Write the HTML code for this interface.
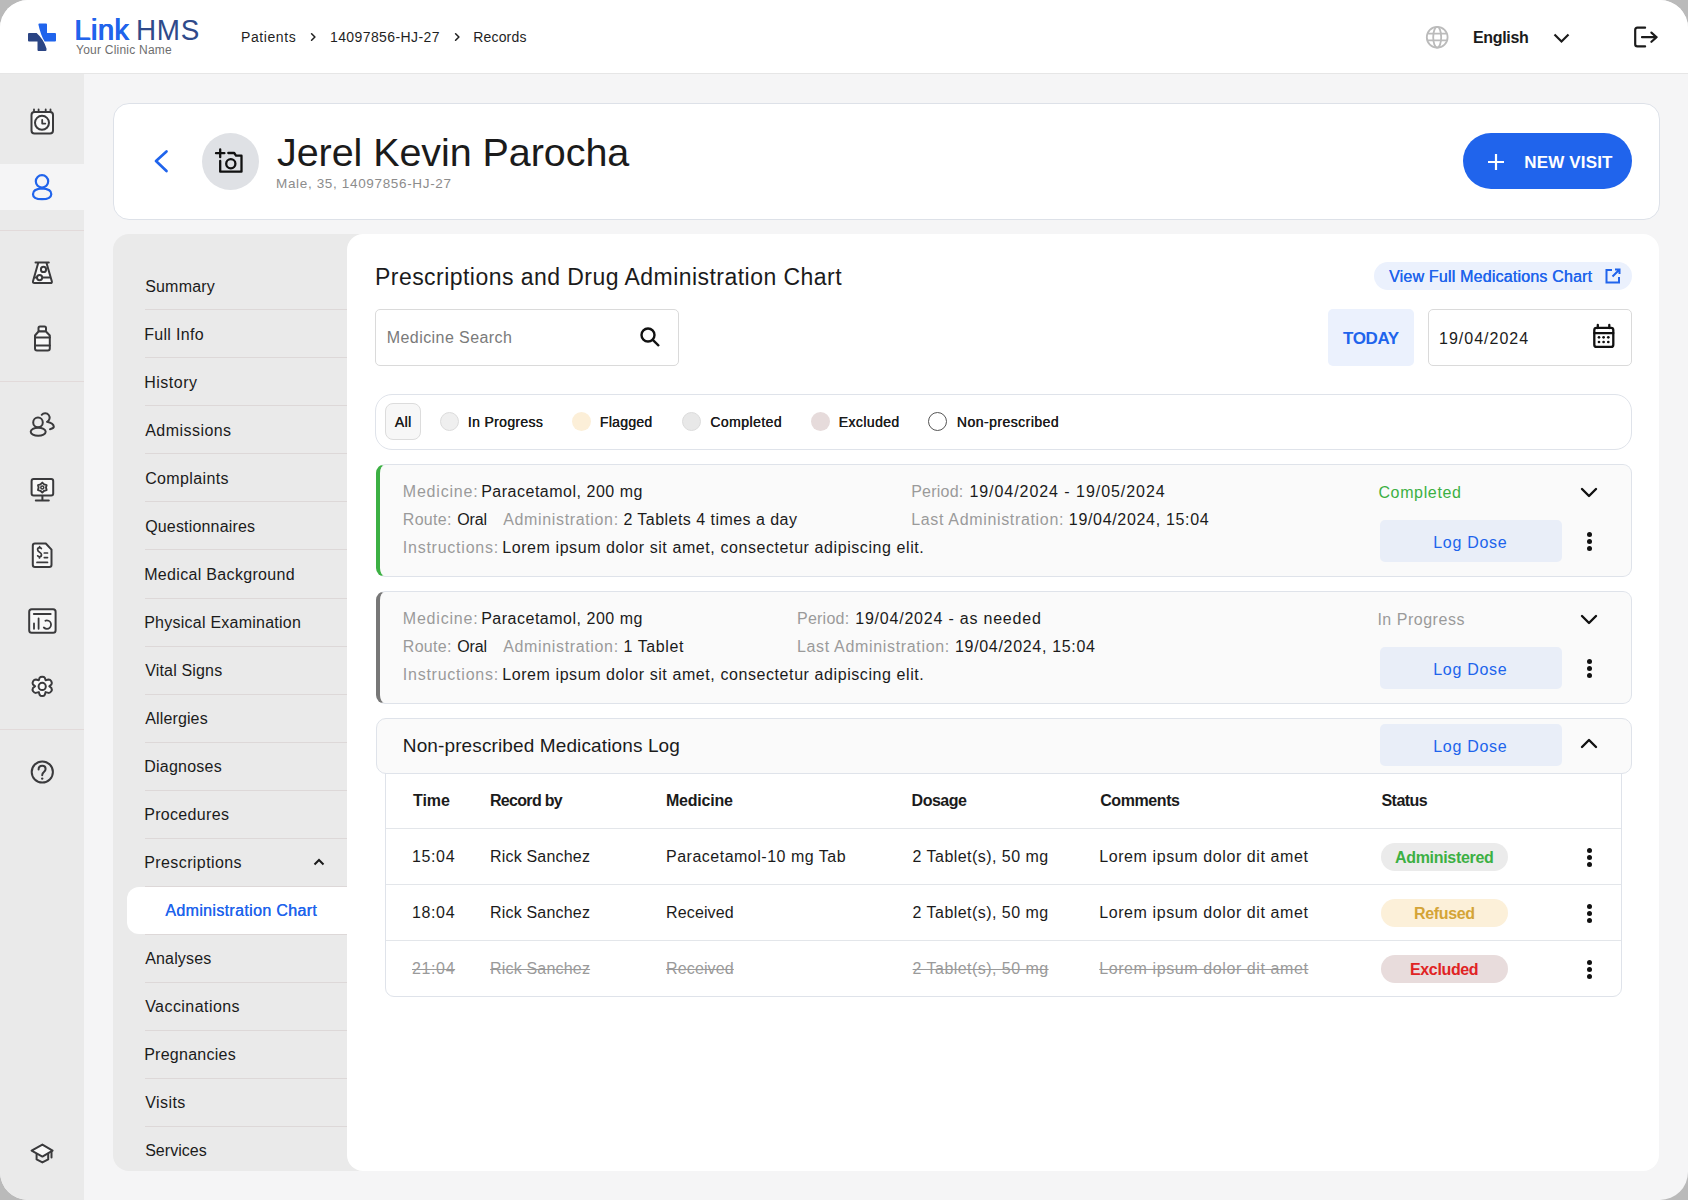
<!DOCTYPE html>
<html><head><meta charset="utf-8">
<style>
*{margin:0;padding:0;box-sizing:border-box}
html,body{width:1688px;height:1200px;overflow:hidden;background:#bababa}
body{font-family:"Liberation Sans",sans-serif;color:#1b1b1b}
#root{position:absolute;left:0;top:0;width:1688px;height:1200px;background:#f5f5f6;border-radius:28px;overflow:hidden}
.a{position:absolute}
.t{position:absolute;line-height:1;white-space:nowrap}
svg{position:absolute;overflow:visible}
.sdiv{position:absolute;left:0;width:84px;height:1px;background:#e2dada}
.ndiv{position:absolute;left:145px;width:202px;height:1px;background:#ddd8d8}
.ld{position:absolute;left:1380px;width:182px;height:42px;border-radius:5px;background:#e9eef8}
.kb{position:absolute;left:1586px;width:7px;height:20px}
.kb i{position:absolute;left:1px;width:5.2px;height:5.2px;border-radius:50%;background:#111}.kb i:nth-child(1){top:1px}.kb i:nth-child(2){top:8px}.kb i:nth-child(3){top:15px}
.rad{position:absolute;width:19px;height:19px;border-radius:50%}
</style></head>
<body><div id="root">

<!-- top bar -->
<div class="a" style="left:0;top:0;width:1688px;height:74px;background:#fff;border-bottom:1px solid #e6e6e6"></div>
<svg style="left:28px;top:23px" width="28" height="28" viewBox="0 0 28 28">
  <path d="M10.4 1.4Q10.4 0.4 11.4 0.4H18Q19 0.4 19 1.4V10H27Q28 10 28 11V17.5Q28 18.5 27 18.5H16.6Q12.5 11.5 10.4 1.4Z" fill="#2064ec"/>
  <path d="M0 11Q0 10 1 10H8.6Q15.5 16 18.5 25.5V27Q18.5 28 17.5 28H10.5Q9.5 28 9.5 27V18.5H1Q0 18.5 0 17.5Z" fill="#2b4584"/>
</svg>
<svg style="left:310px;top:32px" width="7" height="10" viewBox="0 0 7 10"><path d="M1.6 1.8 L4.9 5 L1.6 8.2" fill="none" stroke="#222" stroke-width="1.6" stroke-linecap="round" stroke-linejoin="round"/></svg>
<svg style="left:454px;top:32px" width="7" height="10" viewBox="0 0 7 10"><path d="M1.6 1.8 L4.9 5 L1.6 8.2" fill="none" stroke="#222" stroke-width="1.6" stroke-linecap="round" stroke-linejoin="round"/></svg>
<svg style="left:1425px;top:25px" width="24" height="24" viewBox="0 0 24 24" fill="none" stroke="#bbbbbb" stroke-width="1.8">
  <circle cx="12.2" cy="12.2" r="10.4"/><ellipse cx="12.2" cy="12.2" rx="4" ry="10.4"/><path d="M2.3 8.6H22.1M2.3 15.4H22.1"/>
</svg>
<svg style="left:1553px;top:33px" width="17" height="10" viewBox="0 0 17 10"><path d="M1.5 1.5 L8.5 8.5 L15.5 1.5" fill="none" stroke="#1b1b1b" stroke-width="2.2"/></svg>
<svg style="left:1633px;top:26px" width="26" height="23" viewBox="0 0 26 23" fill="none" stroke="#1b1b1b" stroke-width="2.2">
  <path d="M12.1 1.7H4.4Q2.2 1.7 2.2 3.9V18.2Q2.2 20.4 4.4 20.4H12.1" stroke-linecap="round"/><path d="M9 11.2H23.6M18.4 6.6L23.6 11.2L18.4 15.8" stroke-linecap="round" stroke-linejoin="round"/>
</svg>

<!-- sidebar -->
<div class="a" style="left:0;top:74px;width:84px;height:1126px;background:#eaeaea"></div>
<div class="a" style="left:0;top:164px;width:84px;height:46px;background:#f5f5f6"></div>
<div class="sdiv" style="top:230px"></div>
<div class="sdiv" style="top:381px"></div>
<div class="sdiv" style="top:729px"></div>

<!-- patient card -->
<div class="a" style="left:113px;top:103px;width:1547px;height:117px;background:#fff;border:1px solid #dde1e8;border-radius:16px"></div>
<svg style="left:150px;top:148px" width="22" height="28" viewBox="0 0 22 28"><path d="M16.5 3.5L6 13L16.5 23" fill="none" stroke="#2064ec" stroke-width="2.7" stroke-linecap="round" stroke-linejoin="round"/></svg>
<div class="a" style="left:202px;top:133px;width:57px;height:57px;border-radius:50%;background:#dfe1e5"></div>
<svg style="left:0;top:0" width="1688" height="1200" viewBox="0 0 1688 1200" fill="none" stroke="#111" stroke-width="2.3" stroke-linecap="round" stroke-linejoin="round">
  <path d="M220.2 149.5V157.2M216 153.2H224.4"/>
  <path d="M228.3 153H234.2L236 155.7H241.5V171.7H220.2V160.9"/>
  <circle cx="230.8" cy="163.8" r="4.6"/>
</svg>
<div class="a" style="left:1463px;top:133px;width:169px;height:56px;border-radius:28px;background:#2064ec"></div>
<svg style="left:1486px;top:152px" width="20" height="20" viewBox="0 0 20 20"><path d="M10 2V18M2 10H18" stroke="#fff" stroke-width="2.2"/></svg>

<!-- nav panel + content panel -->
<div class="a" style="left:113px;top:234px;width:260px;height:937px;background:#eaeaea;border-radius:16px 0 0 16px"></div>
<div class="a" style="left:347px;top:234px;width:1312px;height:937px;background:#fff;border-radius:16px"></div>
<div class="ndiv" style="top:309px"></div>
<div class="ndiv" style="top:357px"></div>
<div class="ndiv" style="top:405px"></div>
<div class="ndiv" style="top:453px"></div>
<div class="ndiv" style="top:501px"></div>
<div class="ndiv" style="top:549px"></div>
<div class="ndiv" style="top:598px"></div>
<div class="ndiv" style="top:646px"></div>
<div class="ndiv" style="top:694px"></div>
<div class="ndiv" style="top:742px"></div>
<div class="ndiv" style="top:790px"></div>
<div class="ndiv" style="top:838px"></div>
<div class="ndiv" style="top:886px"></div>
<div class="ndiv" style="top:934px"></div>
<div class="ndiv" style="top:982px"></div>
<div class="ndiv" style="top:1030px"></div>
<div class="ndiv" style="top:1078px"></div>
<div class="ndiv" style="top:1126px"></div>
<div class="a" style="left:127px;top:887px;width:220px;height:47px;background:#fff;border-radius:12px 0 0 12px"></div>
<svg style="left:313px;top:858px" width="12" height="8" viewBox="0 0 12 8"><path d="M1.5 6.5L6 2L10.5 6.5" fill="none" stroke="#1b1b1b" stroke-width="2"/></svg>

<!-- content controls -->
<div class="a" style="left:1374px;top:262px;width:258px;height:28px;border-radius:14px;background:#ebf1fd"></div>
<svg style="left:1603px;top:267px" width="20" height="18" viewBox="0 0 20 18" fill="none" stroke="#2064ec" stroke-width="2"><path d="M9 3H3.5V15.5H16V10M12 2.5H16.5V7M16.5 2.5L9.5 9.5"/></svg>
<div class="a" style="left:375px;top:309px;width:304px;height:57px;border:1px solid #dadada;border-radius:5px;background:#fff"></div>
<svg style="left:638px;top:325px" width="24" height="24" viewBox="0 0 24 24" fill="none" stroke="#111" stroke-width="2.4"><circle cx="10" cy="10" r="6.5"/><path d="M14.8 14.8L21 21"/></svg>
<div class="a" style="left:1328px;top:309px;width:86px;height:57px;border-radius:5px;background:#ebf1fd"></div>
<div class="a" style="left:1428px;top:309px;width:204px;height:57px;border:1px solid #dadada;border-radius:5px;background:#fff"></div>
<svg style="left:1590px;top:322px" width="28" height="28" viewBox="0 0 28 28" fill="none" stroke="#111" stroke-width="2.3"><rect x="4.3" y="5.9" width="19" height="19" rx="2.2"/><path d="M4.3 11.1H23.3M7.8 3V6M19.3 3V6" stroke-linecap="round"/><g fill="#111" stroke="none"><circle cx="9" cy="15.3" r="1.35"/><circle cx="13.6" cy="15.3" r="1.35"/><circle cx="18.3" cy="15.3" r="1.35"/><circle cx="9" cy="20" r="1.35"/><circle cx="13.6" cy="20" r="1.35"/><circle cx="18.3" cy="20" r="1.35"/></g></svg>

<div class="a" style="left:375px;top:394px;width:1257px;height:56px;border:1px solid #dfe3ea;border-radius:17px;background:#fff"></div>
<div class="a" style="left:385px;top:403px;width:36px;height:37px;border:1px solid #dcdcdc;border-radius:8px;background:#f7f7f7"></div>
<div class="rad" style="left:439.5px;top:412px;background:#efefef;border:1px solid #dcdcdc"></div>
<div class="rad" style="left:571.5px;top:412px;background:#fcefd8"></div>
<div class="rad" style="left:682px;top:412px;background:#e8e8e8;border:1px solid #dcdcdc"></div>
<div class="rad" style="left:811px;top:412px;background:#e6dbdb"></div>
<div class="rad" style="left:928px;top:412px;background:#fff;border:1.3px solid #555"></div>

<!-- card 1 -->
<div class="a" style="left:376px;top:464px;width:1256px;height:113px;border:1px solid #dfe3ea;border-left:4px solid #3cb043;border-radius:9px;background:#fafafa"></div>
<svg style="left:1579px;top:485px" width="20" height="14" viewBox="0 0 20 14"><path d="M3 4L10 11L17 4" fill="none" stroke="#111" stroke-width="2.4" stroke-linecap="round" stroke-linejoin="round"/></svg>
<div class="ld" style="top:520px"></div>
<div class="kb" style="top:531px"><i></i><i></i><i></i></div>
<!-- card 2 -->
<div class="a" style="left:376px;top:591px;width:1256px;height:113px;border:1px solid #dfe3ea;border-left:4px solid #777;border-radius:9px;background:#fafafa"></div>
<svg style="left:1579px;top:612px" width="20" height="14" viewBox="0 0 20 14"><path d="M3 4L10 11L17 4" fill="none" stroke="#111" stroke-width="2.4" stroke-linecap="round" stroke-linejoin="round"/></svg>
<div class="ld" style="top:647px"></div>
<div class="kb" style="top:658px"><i></i><i></i><i></i></div>
<!-- card 3 -->
<div class="a" style="left:385px;top:760px;width:1237px;height:237px;border:1px solid #dfe3ea;border-radius:0 0 9px 9px;background:#fff"></div>
<div class="a" style="left:376px;top:718px;width:1256px;height:56px;border:1px solid #dfe3ea;border-radius:10px;background:#fafafa"></div>
<div class="ld" style="top:724px"></div>
<svg style="left:1579px;top:737px" width="20" height="14" viewBox="0 0 20 14"><path d="M3 10L10 3L17 10" fill="none" stroke="#111" stroke-width="2.4" stroke-linecap="round" stroke-linejoin="round"/></svg>
<div class="a" style="left:386px;top:827.5px;width:1235px;height:1px;background:#e3e6ea"></div>
<div class="a" style="left:386px;top:884px;width:1235px;height:1px;background:#e3e6ea"></div>
<div class="a" style="left:386px;top:940px;width:1235px;height:1px;background:#e3e6ea"></div>
<div class="a" style="left:1381px;top:843px;width:127px;height:28px;border-radius:14px;background:#ebebeb"></div>
<div class="a" style="left:1381px;top:899px;width:127px;height:28px;border-radius:14px;background:#fcf0d9"></div>
<div class="a" style="left:1381px;top:955px;width:127px;height:28px;border-radius:14px;background:#e8dcdc"></div>
<div class="kb" style="top:847px"><i></i><i></i><i></i></div>
<div class="kb" style="top:903px"><i></i><i></i><i></i></div>
<div class="kb" style="top:959px"><i></i><i></i><i></i></div>
<div class="t" id="logo_link" style="left:74.20px;top:16.25px;font-size:29px;font-weight:normal;color:#2064ec;letter-spacing:0.500px;text-shadow:0.7px 0 0 #2064ec,-0.3px 0 0 #2064ec;">Link</div>
<div class="t" id="logo_hms" style="left:136.10px;top:16.25px;font-size:29px;font-weight:normal;color:#2f4a8a;letter-spacing:0.800px;transform:scaleX(0.96);transform-origin:0 0;">HMS</div>
<div class="t" id="logo_sub" style="left:76.00px;top:44.14px;font-size:12px;font-weight:normal;color:#6e6e6e;letter-spacing:0.233px;">Your Clinic Name</div>
<div class="t" id="bc1" style="left:241.00px;top:30.25px;font-size:14px;font-weight:normal;color:#1f1f1f;letter-spacing:0.586px;">Patients</div>
<div class="t" id="bc2" style="left:330.00px;top:30.25px;font-size:14px;font-weight:normal;color:#1f1f1f;letter-spacing:0.400px;">14097856-HJ-27</div>
<div class="t" id="bc3" style="left:473.20px;top:30.25px;font-size:14px;font-weight:normal;color:#1f1f1f;letter-spacing:0.183px;">Records</div>
<div class="t" id="lang" style="left:1473.00px;top:30.16px;font-size:16px;font-weight:bold;color:#1b1b1b;letter-spacing:-0.333px;">English</div>
<div class="t" id="name" style="left:277.00px;top:132.96px;font-size:39.5px;font-weight:normal;color:#1b1b1b;letter-spacing:-0.067px;">Jerel Kevin Parocha</div>
<div class="t" id="sub" style="left:276.00px;top:177.07px;font-size:13.5px;font-weight:normal;color:#8c8c8c;letter-spacing:0.657px;">Male, 35, 14097856-HJ-27</div>
<div class="t" id="newvisit" style="left:1524.20px;top:154.31px;font-size:17px;font-weight:bold;color:#fff;letter-spacing:0.175px;">NEW VISIT</div>
<div class="t" id="nav0" style="left:145.20px;top:279.36px;font-size:16px;font-weight:normal;color:#1b1b1b;letter-spacing:0.183px;">Summary</div>
<div class="t" id="nav1" style="left:144.20px;top:327.36px;font-size:16px;font-weight:normal;color:#1b1b1b;letter-spacing:0.312px;">Full Info</div>
<div class="t" id="nav2" style="left:144.20px;top:375.36px;font-size:16px;font-weight:normal;color:#1b1b1b;letter-spacing:0.517px;">History</div>
<div class="t" id="nav3" style="left:145.20px;top:423.36px;font-size:16px;font-weight:normal;color:#1b1b1b;letter-spacing:0.456px;">Admissions</div>
<div class="t" id="nav4" style="left:145.20px;top:471.36px;font-size:16px;font-weight:normal;color:#1b1b1b;letter-spacing:0.367px;">Complaints</div>
<div class="t" id="nav5" style="left:145.20px;top:519.36px;font-size:16px;font-weight:normal;color:#1b1b1b;letter-spacing:0.169px;">Questionnaires</div>
<div class="t" id="nav6" style="left:144.20px;top:567.36px;font-size:16px;font-weight:normal;color:#1b1b1b;letter-spacing:0.324px;">Medical Background</div>
<div class="t" id="nav7" style="left:144.20px;top:615.36px;font-size:16px;font-weight:normal;color:#1b1b1b;letter-spacing:0.242px;">Physical Examination</div>
<div class="t" id="nav8" style="left:145.20px;top:663.36px;font-size:16px;font-weight:normal;color:#1b1b1b;letter-spacing:0.170px;">Vital Signs</div>
<div class="t" id="nav9" style="left:145.20px;top:711.36px;font-size:16px;font-weight:normal;color:#1b1b1b;letter-spacing:0.137px;">Allergies</div>
<div class="t" id="nav10" style="left:144.20px;top:759.36px;font-size:16px;font-weight:normal;color:#1b1b1b;letter-spacing:0.237px;">Diagnoses</div>
<div class="t" id="nav11" style="left:144.20px;top:807.36px;font-size:16px;font-weight:normal;color:#1b1b1b;letter-spacing:0.322px;">Procedures</div>
<div class="t" id="nav12" style="left:144.20px;top:855.36px;font-size:16px;font-weight:normal;color:#1b1b1b;letter-spacing:0.408px;">Prescriptions</div>
<div class="t" id="nav13" style="left:165.20px;top:903.36px;font-size:16px;font-weight:normal;color:#2064ec;letter-spacing:0.347px;text-shadow:0.3px 0 0 #2064ec;">Administration Chart</div>
<div class="t" id="nav14" style="left:145.20px;top:951.36px;font-size:16px;font-weight:normal;color:#1b1b1b;letter-spacing:0.157px;">Analyses</div>
<div class="t" id="nav15" style="left:145.20px;top:999.36px;font-size:16px;font-weight:normal;color:#1b1b1b;letter-spacing:0.445px;">Vaccinations</div>
<div class="t" id="nav16" style="left:144.20px;top:1047.36px;font-size:16px;font-weight:normal;color:#1b1b1b;letter-spacing:0.260px;">Pregnancies</div>
<div class="t" id="nav17" style="left:145.20px;top:1095.36px;font-size:16px;font-weight:normal;color:#1b1b1b;letter-spacing:0.440px;">Visits</div>
<div class="t" id="nav18" style="left:145.20px;top:1143.36px;font-size:16px;font-weight:normal;color:#1b1b1b;letter-spacing:0.014px;">Services</div>
<div class="t" id="title" style="left:375.00px;top:265.63px;font-size:23px;font-weight:normal;color:#1b1b1b;letter-spacing:0.455px;">Prescriptions and Drug Administration Chart</div>
<div class="t" id="viewfull" style="left:1389.00px;top:269.46px;font-size:16px;font-weight:normal;color:#2064ec;letter-spacing:0.192px;text-shadow:0.3px 0 0 #2064ec;">View Full Medications Chart</div>
<div class="t" id="search" style="left:386.80px;top:330.26px;font-size:16px;font-weight:normal;color:#7a7a7a;letter-spacing:0.421px;">Medicine Search</div>
<div class="t" id="today" style="left:1343.00px;top:329.51px;font-size:17px;font-weight:bold;color:#2064ec;letter-spacing:-0.400px;">TODAY</div>
<div class="t" id="date" style="left:1439.00px;top:330.96px;font-size:16px;font-weight:normal;color:#1b1b1b;letter-spacing:1.011px;">19/04/2024</div>
<div class="t" id="f_all" style="left:394.80px;top:415.25px;font-size:14px;font-weight:normal;color:#1b1b1b;letter-spacing:0.400px;text-shadow:0.3px 0 0 #1b1b1b;">All</div>
<div class="t" id="f_inp" style="left:467.80px;top:415.25px;font-size:14px;font-weight:normal;color:#1b1b1b;letter-spacing:0.330px;text-shadow:0.3px 0 0 #1b1b1b;">In Progress</div>
<div class="t" id="f_flag" style="left:599.80px;top:415.25px;font-size:14px;font-weight:normal;color:#1b1b1b;letter-spacing:0.283px;text-shadow:0.3px 0 0 #1b1b1b;">Flagged</div>
<div class="t" id="f_comp" style="left:710.20px;top:415.25px;font-size:14px;font-weight:normal;color:#1b1b1b;letter-spacing:0.450px;text-shadow:0.3px 0 0 #1b1b1b;">Completed</div>
<div class="t" id="f_excl" style="left:838.60px;top:415.25px;font-size:14px;font-weight:normal;color:#1b1b1b;letter-spacing:0.414px;text-shadow:0.3px 0 0 #1b1b1b;">Excluded</div>
<div class="t" id="f_non" style="left:956.80px;top:415.25px;font-size:14px;font-weight:normal;color:#1b1b1b;letter-spacing:0.462px;text-shadow:0.3px 0 0 #1b1b1b;">Non-prescribed</div>
<div class="t" id="c1_l1" style="left:402.80px;top:483.56px;font-size:16px;font-weight:normal;color:#9a9a9a;letter-spacing:0.800px;">Medicine:</div>
<div class="t" id="c1_v1" style="left:481.20px;top:483.56px;font-size:16px;font-weight:normal;color:#1b1b1b;letter-spacing:0.506px;">Paracetamol, 200 mg</div>
<div class="t" id="c1_l2" style="left:402.80px;top:511.56px;font-size:16px;font-weight:normal;color:#9a9a9a;letter-spacing:0.280px;">Route:</div>
<div class="t" id="c1_v2" style="left:457.20px;top:511.56px;font-size:16px;font-weight:normal;color:#1b1b1b;letter-spacing:-0.100px;">Oral</div>
<div class="t" id="c1_l3" style="left:503.20px;top:511.56px;font-size:16px;font-weight:normal;color:#9a9a9a;letter-spacing:0.650px;">Administration:</div>
<div class="t" id="c1_v3" style="left:623.40px;top:511.56px;font-size:16px;font-weight:normal;color:#1b1b1b;letter-spacing:0.464px;">2 Tablets 4 times a day</div>
<div class="t" id="c1_l4" style="left:402.80px;top:539.56px;font-size:16px;font-weight:normal;color:#9a9a9a;letter-spacing:0.758px;">Instructions:</div>
<div class="t" id="c1_v4" style="left:502.20px;top:539.56px;font-size:16px;font-weight:normal;color:#1b1b1b;letter-spacing:0.584px;">Lorem ipsum dolor sit amet, consectetur adipiscing elit.</div>
<div class="t" id="c1_l5" style="left:911.20px;top:483.56px;font-size:16px;font-weight:normal;color:#9a9a9a;letter-spacing:0.233px;">Period:</div>
<div class="t" id="c1_v5" style="left:969.40px;top:483.56px;font-size:16px;font-weight:normal;color:#1b1b1b;letter-spacing:0.950px;">19/04/2024 - 19/05/2024</div>
<div class="t" id="c1_l6" style="left:911.20px;top:511.56px;font-size:16px;font-weight:normal;color:#9a9a9a;letter-spacing:0.663px;">Last Administration:</div>
<div class="t" id="c1_v6" style="left:1068.80px;top:511.56px;font-size:16px;font-weight:normal;color:#1b1b1b;letter-spacing:0.681px;">19/04/2024, 15:04</div>
<div class="t" id="c1_st" style="left:1378.40px;top:484.96px;font-size:16px;font-weight:normal;color:#3cb043;letter-spacing:0.650px;">Completed</div>
<div class="t" id="c2_l1" style="left:402.80px;top:610.56px;font-size:16px;font-weight:normal;color:#9a9a9a;letter-spacing:0.800px;">Medicine:</div>
<div class="t" id="c2_v1" style="left:481.20px;top:610.56px;font-size:16px;font-weight:normal;color:#1b1b1b;letter-spacing:0.506px;">Paracetamol, 200 mg</div>
<div class="t" id="c2_l2" style="left:402.80px;top:638.56px;font-size:16px;font-weight:normal;color:#9a9a9a;letter-spacing:0.280px;">Route:</div>
<div class="t" id="c2_v2" style="left:457.20px;top:638.56px;font-size:16px;font-weight:normal;color:#1b1b1b;letter-spacing:-0.100px;">Oral</div>
<div class="t" id="c2_l3" style="left:503.20px;top:638.56px;font-size:16px;font-weight:normal;color:#9a9a9a;letter-spacing:0.650px;">Administration:</div>
<div class="t" id="c2_v3" style="left:623.40px;top:638.56px;font-size:16px;font-weight:normal;color:#1b1b1b;letter-spacing:0.600px;">1 Tablet</div>
<div class="t" id="c2_l4" style="left:402.80px;top:666.56px;font-size:16px;font-weight:normal;color:#9a9a9a;letter-spacing:0.758px;">Instructions:</div>
<div class="t" id="c2_v4" style="left:502.20px;top:666.56px;font-size:16px;font-weight:normal;color:#1b1b1b;letter-spacing:0.584px;">Lorem ipsum dolor sit amet, consectetur adipiscing elit.</div>
<div class="t" id="c2_l5" style="left:797.00px;top:610.56px;font-size:16px;font-weight:normal;color:#9a9a9a;letter-spacing:0.233px;">Period:</div>
<div class="t" id="c2_v5" style="left:855.20px;top:610.56px;font-size:16px;font-weight:normal;color:#1b1b1b;letter-spacing:0.790px;">19/04/2024 - as needed</div>
<div class="t" id="c2_l6" style="left:797.00px;top:638.56px;font-size:16px;font-weight:normal;color:#9a9a9a;letter-spacing:0.663px;">Last Administration:</div>
<div class="t" id="c2_v6" style="left:955.00px;top:638.56px;font-size:16px;font-weight:normal;color:#1b1b1b;letter-spacing:0.681px;">19/04/2024, 15:04</div>
<div class="t" id="c2_st" style="left:1377.40px;top:611.96px;font-size:16px;font-weight:normal;color:#9a9a9a;letter-spacing:0.520px;">In Progress</div>
<div class="t" id="ld0" style="left:1433.20px;top:534.96px;font-size:16px;font-weight:normal;color:#2064ec;letter-spacing:0.714px;">Log Dose</div>
<div class="t" id="ld1" style="left:1433.20px;top:661.96px;font-size:16px;font-weight:normal;color:#2064ec;letter-spacing:0.714px;">Log Dose</div>
<div class="t" id="ld2" style="left:1433.20px;top:738.96px;font-size:16px;font-weight:normal;color:#2064ec;letter-spacing:0.714px;">Log Dose</div>
<div class="t" id="nplog" style="left:402.80px;top:735.82px;font-size:19px;font-weight:normal;color:#1b1b1b;letter-spacing:0.121px;">Non-prescribed Medications Log</div>
<div class="t" id="th0" style="left:413.00px;top:793.06px;font-size:16px;font-weight:bold;color:#1b1b1b;letter-spacing:-0.067px;">Time</div>
<div class="t" id="th1" style="left:490.00px;top:793.06px;font-size:16px;font-weight:bold;color:#1b1b1b;letter-spacing:-0.688px;">Record by</div>
<div class="t" id="th2" style="left:666.00px;top:793.06px;font-size:16px;font-weight:bold;color:#1b1b1b;letter-spacing:-0.214px;">Medicine</div>
<div class="t" id="th3" style="left:911.60px;top:793.06px;font-size:16px;font-weight:bold;color:#1b1b1b;letter-spacing:-0.520px;">Dosage</div>
<div class="t" id="th4" style="left:1100.20px;top:793.06px;font-size:16px;font-weight:bold;color:#1b1b1b;letter-spacing:-0.414px;">Comments</div>
<div class="t" id="th5" style="left:1381.50px;top:793.06px;font-size:16px;font-weight:bold;color:#1b1b1b;letter-spacing:-0.550px;">Status</div>
<div class="t" id="r0_0" style="left:412.00px;top:849.06px;font-size:16px;font-weight:normal;color:#1b1b1b;letter-spacing:0.625px;">15:04</div>
<div class="t" id="r0_1" style="left:490.00px;top:849.06px;font-size:16px;font-weight:normal;color:#1b1b1b;letter-spacing:0.191px;">Rick Sanchez</div>
<div class="t" id="r0_2" style="left:666.00px;top:849.06px;font-size:16px;font-weight:normal;color:#1b1b1b;letter-spacing:0.500px;">Paracetamol-10 mg Tab</div>
<div class="t" id="r0_3" style="left:912.60px;top:849.06px;font-size:16px;font-weight:normal;color:#1b1b1b;letter-spacing:0.459px;">2 Tablet(s), 50 mg</div>
<div class="t" id="r0_4" style="left:1099.20px;top:849.06px;font-size:16px;font-weight:normal;color:#1b1b1b;letter-spacing:0.596px;">Lorem ipsum dolor dit amet</div>
<div class="t" id="r1_0" style="left:412.00px;top:905.06px;font-size:16px;font-weight:normal;color:#1b1b1b;letter-spacing:0.625px;">18:04</div>
<div class="t" id="r1_1" style="left:490.00px;top:905.06px;font-size:16px;font-weight:normal;color:#1b1b1b;letter-spacing:0.191px;">Rick Sanchez</div>
<div class="t" id="r1_2" style="left:666.00px;top:905.06px;font-size:16px;font-weight:normal;color:#1b1b1b;letter-spacing:0.143px;">Received</div>
<div class="t" id="r1_3" style="left:912.60px;top:905.06px;font-size:16px;font-weight:normal;color:#1b1b1b;letter-spacing:0.459px;">2 Tablet(s), 50 mg</div>
<div class="t" id="r1_4" style="left:1099.20px;top:905.06px;font-size:16px;font-weight:normal;color:#1b1b1b;letter-spacing:0.596px;">Lorem ipsum dolor dit amet</div>
<div class="t" id="r2_0" style="left:412.00px;top:961.06px;font-size:16px;font-weight:normal;color:#9a9a9a;letter-spacing:0.625px;text-decoration:line-through;text-decoration-thickness:1px;">21:04</div>
<div class="t" id="r2_1" style="left:490.00px;top:961.06px;font-size:16px;font-weight:normal;color:#9a9a9a;letter-spacing:0.191px;text-decoration:line-through;text-decoration-thickness:1px;">Rick Sanchez</div>
<div class="t" id="r2_2" style="left:666.00px;top:961.06px;font-size:16px;font-weight:normal;color:#9a9a9a;letter-spacing:0.143px;text-decoration:line-through;text-decoration-thickness:1px;">Received</div>
<div class="t" id="r2_3" style="left:912.60px;top:961.06px;font-size:16px;font-weight:normal;color:#9a9a9a;letter-spacing:0.459px;text-decoration:line-through;text-decoration-thickness:1px;">2 Tablet(s), 50 mg</div>
<div class="t" id="r2_4" style="left:1099.20px;top:961.06px;font-size:16px;font-weight:normal;color:#9a9a9a;letter-spacing:0.596px;text-decoration:line-through;text-decoration-thickness:1px;">Lorem ipsum dolor dit amet</div>
<div class="t" id="pill0" style="left:1395.00px;top:849.56px;font-size:16px;font-weight:bold;color:#3cb043;letter-spacing:-0.318px;">Administered</div>
<div class="t" id="pill1" style="left:1414.00px;top:905.56px;font-size:16px;font-weight:bold;color:#d4a437;letter-spacing:-0.333px;">Refused</div>
<div class="t" id="pill2" style="left:1410.00px;top:961.56px;font-size:16px;font-weight:bold;color:#e02424;letter-spacing:-0.357px;">Excluded</div>
<!-- ICON OVERLAY -->
<svg style="left:0;top:0" width="1688" height="1200" viewBox="0 0 1688 1200" fill="none" stroke-linecap="round" stroke-linejoin="round">
 <g stroke="#3a3a3c" stroke-width="2">
  <!-- calendar clock -->
  <rect x="31.5" y="112" width="21.5" height="21.5" rx="3" fill="#f8f8f8"/>
  <path d="M34 109.3V111.5M38.6 109.3V111.5M45.7 109.3V111.5M50.5 109.3V111.5" stroke-width="1.8"/>
  <circle cx="42" cy="122.8" r="7"/>
  <path d="M42.2 119.8V123.6H45.3" stroke-width="1.8"/>
  <!-- flask -->
  <path d="M35.5 262.5H48.8M38.2 263L33 281.2Q32.6 283 34.5 283H50.5Q52.3 283 51.8 281.2L46.5 263" fill="#f8f8f8"/>
  <path d="M34.5 277.5H49.5"/>
  <circle cx="39.6" cy="277.6" r="2.6" fill="#f8f8f8"/>
  <circle cx="43.5" cy="269.4" r="2.6" fill="#f8f8f8"/>
  <!-- bottle -->
  <rect x="38.5" y="326.5" width="7.5" height="5" rx="1.5" fill="#f8f8f8"/>
  <path d="M38.5 331.5L35 335.5V348.5Q35 350.5 37 350.5H47.8Q49.8 350.5 49.8 348.5V335.5L46 331.5Z" fill="#f8f8f8"/>
  <path d="M35 337.5H49.8M35 345.5H49.8"/>
  <!-- users -->
  <circle cx="38" cy="422.4" r="4.8" fill="none"/>
  <ellipse cx="38.2" cy="431.8" rx="7.5" ry="4" fill="none"/>
  <path d="M41.7 414.8A4.5 4.5 0 1 1 47 421.8Q53.5 423.3 53.8 426.5Q54 428.3 50 429.2"/>
  <!-- monitor -->
  <rect x="31.6" y="479" width="21.6" height="16.6" rx="2" fill="#f8f8f8"/>
  <path d="M42.4 496V500.3M35.8 500.4H48.8"/>
  <path d="M42.30 482.60L44.15 484.40L46.63 485.10L46.00 487.60L46.63 490.10L44.15 490.80L42.30 492.60L40.45 490.80L37.97 490.10L38.60 487.60L37.97 485.10L40.45 484.40Z" stroke-width="1.9"/>
  <circle cx="42.3" cy="487.6" r="1.5" stroke-width="1.5"/>
  <!-- invoice -->
  <path d="M45.8 543.5H35Q32.8 543.5 32.8 545.7V564.8Q32.8 567 35 567H49.3Q51.5 567 51.5 564.8V549.6Z" fill="#f8f8f8"/>
  <path d="M41.4 548.6Q40.8 547.6 39.6 547.6Q37.6 547.6 37.6 549.6Q37.6 551.2 39.6 552.2Q41.5 553.2 41.5 554.8Q41.5 556.8 39.5 556.8Q38.3 556.8 37.7 555.8M39.6 546.5V548M39.5 556.8V558" stroke-width="1.7"/>
  <path d="M44.3 553H47.5M44.3 557.6H47.5M37 562.4H47.5" stroke-width="1.7"/>
  <!-- report -->
  <rect x="29.2" y="609.2" width="26.4" height="23.6" rx="2.5" fill="#f8f8f8"/>
  <path d="M33.8 614H50.7" stroke-width="1.8"/>
  <path d="M34 623.5V628.8M38.6 618.3V628.8" stroke-width="1.8"/>
  <path d="M43.8 628Q45.2 629.3 46.8 629.3A4.2 4.2 0 0 0 46.8 620.8Q46 620.8 45.4 621.2" stroke-width="1.8" transform="translate(0 -0.5)"/>
  <!-- gear -->
  <path d="M39.6 676.8Q40.3 675.8 42.2 675.8Q44.1 675.8 44.8 676.8L45.6 679.4L48.6 678.6Q50.2 678.6 51.3 680.3Q52.3 682 51.4 683.5L49.3 685.3L51.4 687.1Q52.3 688.6 51.3 690.3Q50.2 692 48.6 692L45.6 691.2L44.8 693.8Q44.1 695.2 42.2 695.2Q40.3 695.2 39.6 693.8L38.8 691.2L35.8 692Q34.2 692 33.1 690.3Q32.1 688.6 33 687.1L35.1 685.3L33 683.5Q32.1 682 33.1 680.3Q34.2 678.6 35.8 678.6L38.8 679.4Z" fill="#f8f8f8" transform="translate(0 0.9)"/>
  <circle cx="42.2" cy="686.4" r="3.6"/>
  <!-- help -->
  <circle cx="42.3" cy="772" r="10.6"/>
  <path d="M38.6 769.4Q38.6 765.8 42.2 765.8Q45.6 765.8 45.6 769Q45.6 770.6 43.9 772Q42.2 773.4 42.2 775.2" stroke-width="2"/>
  <circle cx="42.2" cy="778.6" r="1.2" fill="#3a3a3c" stroke="none"/>
  <!-- grad cap -->
  <path d="M42.4 1144.6L52.6 1150.6L42.4 1156.6L31.6 1150.6Z" fill="#f8f8f8"/>
  <path d="M36.6 1154V1159.4L42.4 1162.4L48.2 1159.4V1153.8M51.5 1151.5V1157.4"/>
 </g>
 <!-- person (active) -->
 <g stroke="#2064ec" stroke-width="2.2">
  <circle cx="42" cy="181.3" r="6.2"/>
  <path d="M42 188.4Q51.5 189 51.3 194.2Q51 199.2 42 199.2Q33 199.2 33 194.2Q33 189 42 188.4Z"/>
 </g>
</svg>

</div></body></html>
